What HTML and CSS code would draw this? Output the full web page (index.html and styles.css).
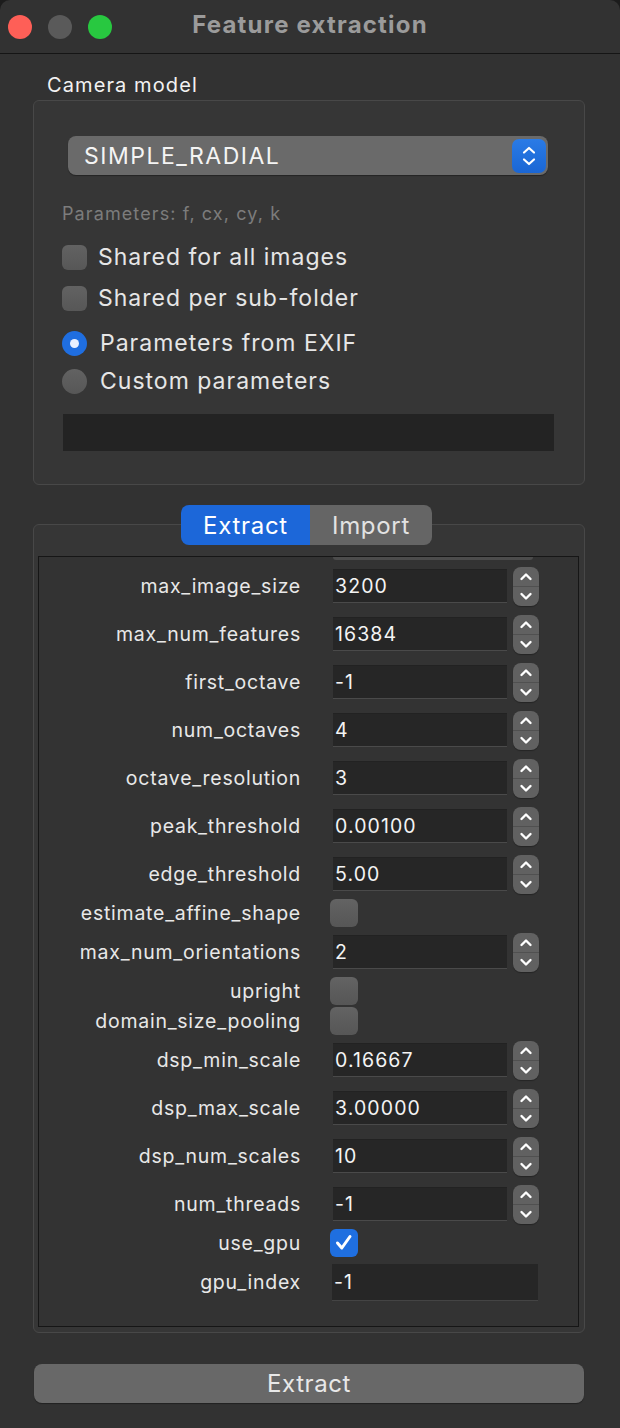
FILE: index.html
```html
<!DOCTYPE html>
<html>
<head>
<meta charset="utf-8">
<link rel="stylesheet" href="styles.css">
</head>
<body>
<div class="window">
  <header class="titlebar">
    <div class="lights"><span class="light red"></span><span class="light gray"></span><span class="light green"></span></div>
    <h1 class="title">Feature extraction</h1>
    <div></div>
  </header>
  <main class="content">
    <div class="group-label">Camera model</div>
    <section class="group camera">
      <div class="select">
        <span class="select-text">SIMPLE_RADIAL</span>
        <span class="select-btn"><svg width="34" height="34" viewBox="0 0 34 34"><path d="M12 13.5 L17 9 L22 13.5" fill="none" stroke="#fff" stroke-width="2.2" stroke-linecap="round" stroke-linejoin="round"/><path d="M12 20.5 L17 25 L22 20.5" fill="none" stroke="#fff" stroke-width="2.2" stroke-linecap="round" stroke-linejoin="round"/></svg></span>
      </div>
      <div class="hint">Parameters: f, cx, cy, k</div>
      <div class="opt o1"><span class="cb"></span>Shared for all images</div>
      <div class="opt o2"><span class="cb"></span>Shared per sub-folder</div>
      <div class="opt o3"><span class="radio on"></span>Parameters from EXIF</div>
      <div class="opt o4"><span class="radio"></span>Custom parameters</div>
      <div class="params-field"></div>
    </section>
    <div class="tabs"><span class="tab active">Extract</span><span class="tab">Import</span></div>
    <section class="group options">
      <div class="scroll">
        <div class="stub"></div>
        <div class="form">
          <div class="row"><span class="lbl">max_image_size</span><div class="spin"><span class="field">3200</span><span class="stepper"></span></div></div>
          <div class="row"><span class="lbl">max_num_features</span><div class="spin"><span class="field">16384</span><span class="stepper"></span></div></div>
          <div class="row"><span class="lbl">first_octave</span><div class="spin"><span class="field">-1</span><span class="stepper"></span></div></div>
          <div class="row"><span class="lbl">num_octaves</span><div class="spin"><span class="field">4</span><span class="stepper"></span></div></div>
          <div class="row"><span class="lbl">octave_resolution</span><div class="spin"><span class="field">3</span><span class="stepper"></span></div></div>
          <div class="row"><span class="lbl">peak_threshold</span><div class="spin"><span class="field">0.00100</span><span class="stepper"></span></div></div>
          <div class="row"><span class="lbl">edge_threshold</span><div class="spin"><span class="field">5.00</span><span class="stepper"></span></div></div>
          <div class="row check"><span class="lbl">estimate_affine_shape</span><span class="box"></span></div>
          <div class="row"><span class="lbl">max_num_orientations</span><div class="spin"><span class="field">2</span><span class="stepper"></span></div></div>
          <div class="row check"><span class="lbl">upright</span><span class="box"></span></div>
          <div class="row check"><span class="lbl">domain_size_pooling</span><span class="box"></span></div>
          <div class="row"><span class="lbl">dsp_min_scale</span><div class="spin"><span class="field">0.16667</span><span class="stepper"></span></div></div>
          <div class="row"><span class="lbl">dsp_max_scale</span><div class="spin"><span class="field">3.00000</span><span class="stepper"></span></div></div>
          <div class="row"><span class="lbl">dsp_num_scales</span><div class="spin"><span class="field">10</span><span class="stepper"></span></div></div>
          <div class="row"><span class="lbl">num_threads</span><div class="spin"><span class="field">-1</span><span class="stepper"></span></div></div>
          <div class="row check"><span class="lbl">use_gpu</span><span class="box on"><svg width="27" height="27" viewBox="0 0 27 27"><path d="M7.5 14 L11.8 19 L20 7.5" fill="none" stroke="#fff" stroke-width="3" stroke-linecap="round" stroke-linejoin="round"/></svg></span></div>
          <div class="row"><span class="lbl">gpu_index</span><span class="field wide">-1</span></div>
        </div>
      </div>
    </section>
    <div class="btn">Extract</div>
  </main>
</div>
</body>
</html>
```

FILE: styles.css
```css
* { box-sizing: border-box; }
html, body { margin: 0; padding: 0; background: #1c1c1c; }
body {
  font-family: Inter, "Noto Sans", "Liberation Sans", sans-serif;
  color: #e4e4e4;
  width: 620px;
  height: 1428px;
  overflow: hidden;
}
.window {
  width: 620px;
  height: 1428px;
  background: #323232;
  border-radius: 10px 10px 0 0;
  overflow: hidden;
}
.titlebar {
  height: 54px;
  border-bottom: 1px solid #151515;
  display: grid;
  grid-template-columns: 1fr auto 1fr;
  align-items: center;
}
.lights { display: flex; gap: 16px; padding-left: 8px; }
.light { width: 24px; height: 24px; border-radius: 50%; display: block; }
.red { background: #fe5f57; }
.gray { background: #5a5a5a; }
.green { background: #28c840; }
.title {
  margin: 0;
  font-size: 24px;
  font-weight: 700;
  letter-spacing: 1.2px;
  color: #9b9b9b;
  padding-bottom: 4px;
}
.content { display: flex; flex-direction: column; }
.group-label {
  margin: 19px 0 0 47px;
  font-size: 20px;
  letter-spacing: 1.1px;
  line-height: 24px;
  color: #f2f2f2;
}
.group {
  margin-left: 33px;
  width: 552px;
  border: 1px solid #484848;
  border-radius: 6px;
  background: #363636;
}
.camera {
  margin-top: 3px;
  padding: 35px 0 33px 28px;
  display: flex;
  flex-direction: column;
}
.select {
  margin-left: 6px;
  width: 480px;
  height: 39px;
  border-radius: 8px;
  background: #6a6a6a;
  box-shadow: 0 1px 1px rgba(0,0,0,0.35);
  display: flex;
  align-items: center;
  justify-content: space-between;
  padding: 0 2px 0 16px;
}
.select-text { font-size: 23px; letter-spacing: 1.5px; color: #f4f4f4; }
.select-btn {
  width: 34px; height: 34px;
  border-radius: 7px;
  background: linear-gradient(#2a7be6, #1a66d4);
  display: flex;
}
.hint {
  margin-top: 28px;
  font-size: 18px;
  letter-spacing: 1.1px;
  line-height: 22px;
  color: #7c7c7c;
}
.opt {
  height: 40px;
  display: flex;
  align-items: center;
  font-size: 23px;
  letter-spacing: 1px;
  color: #e6e6e6;
}
.o1 { margin-top: 12px; }
.o2 { margin-top: 1px; }
.o3 { margin-top: 5px; }
.o4 { margin-top: -2px; }
.cb {
  width: 25px; height: 25px;
  border-radius: 6px;
  background: linear-gradient(#626262, #575757);
  margin-right: 11px;
  flex: none;
}
.radio {
  width: 25px; height: 25px;
  border-radius: 50%;
  background: linear-gradient(#626262, #575757);
  margin-right: 13px;
  flex: none;
  display: flex; align-items: center; justify-content: center;
}
.radio.on { background: #1f6ee0; }
.radio.on::after {
  content: "";
  width: 9px; height: 9px; border-radius: 50%;
  background: #e8f0ff;
}
.params-field {
  margin: 13px 0 0 1px;
  width: 491px;
  height: 37px;
  background: #232323;
}
.tabs {
  margin: 20px 0 -21px 181px;
  display: flex;
  height: 40px;
  position: relative;
  z-index: 1;
  align-self: flex-start;
}
.tab {
  height: 40px;
  display: flex;
  align-items: center;
  justify-content: center;
  font-size: 24px;
  letter-spacing: 0.7px;
  color: #e2e2e2;
  background: #656565;
  width: 122px;
  border-radius: 0 8px 8px 0;
}
.tab.active {
  width: 129px;
  background: #1c67d9;
  color: #fff;
  border-radius: 8px 0 0 8px;
}
.options {
  padding: 31px 6px 5px 4px;
}
.scroll {
  width: 541px;
  height: 771px;
  border: 1px solid #161616;
  background: #333333;
  overflow: hidden;
}
.stub {
  margin-left: 294px;
  width: 200px;
  height: 3px;
  background: #4c4c4c;
  border-radius: 0 0 6px 6px;
}
.form { margin-top: 2px; display: flex; flex-direction: column; }
.row {
  height: 48px;
  display: grid;
  grid-template-columns: 262px auto;
  column-gap: 32px;
  align-items: center;
  justify-content: start;
}
.row.check { height: 30px; }
.lbl {
  text-align: right;
  font-size: 19.5px;
  letter-spacing: 0.75px;
  color: #e8e8e8;
  white-space: nowrap;
}
.spin { display: flex; align-items: center; gap: 6px; }
.field {
  width: 174px;
  height: 34px;
  background: #262626;
  border-top: 1px solid #222;
  border-bottom: 1px solid #4a4a4a;
  display: flex;
  align-items: center;
  padding-left: 2px;
  font-size: 19.5px;
  letter-spacing: 1.1px;
  color: #f4f4f4;
}
.field.wide {
  width: 206px;
  height: 37px;
  margin-left: -1px;
  border-top: 1px solid #262626;
  border-bottom: 1px solid #444;
}
.stepper {
  width: 26px;
  height: 39px;
  border-radius: 8px;
  background-color: #616161;
  background-image:
    url("data:image/svg+xml;utf8,<svg xmlns='http://www.w3.org/2000/svg' width='26' height='39' viewBox='0 0 26 39'><path d='M8.5 12 L13 7.5 L17.5 12' fill='none' stroke='white' stroke-width='2.4' stroke-linecap='round' stroke-linejoin='round'/><path d='M8.5 27 L13 31.5 L17.5 27' fill='none' stroke='white' stroke-width='2.4' stroke-linecap='round' stroke-linejoin='round'/><rect x='0' y='19' width='26' height='1' fill='%23505050'/></svg>");
  box-shadow: 0 1px 1px rgba(0,0,0,0.3);
}
.box {
  width: 28px; height: 28px;
  border-radius: 6px;
  margin-left: -3px;
  background: linear-gradient(#636363, #565656);
  display: flex;
}
.box.on { background: #1f6fe0; }
.btn {
  margin: 31px 0 0 34px;
  width: 550px;
  height: 39px;
  border-radius: 8px;
  background: #686868;
  box-shadow: 0 1px 1px rgba(0,0,0,0.35);
  display: flex;
  align-items: center;
  justify-content: center;
  font-size: 24px;
  letter-spacing: 0.6px;
  color: #e8e8e8;
}
```
